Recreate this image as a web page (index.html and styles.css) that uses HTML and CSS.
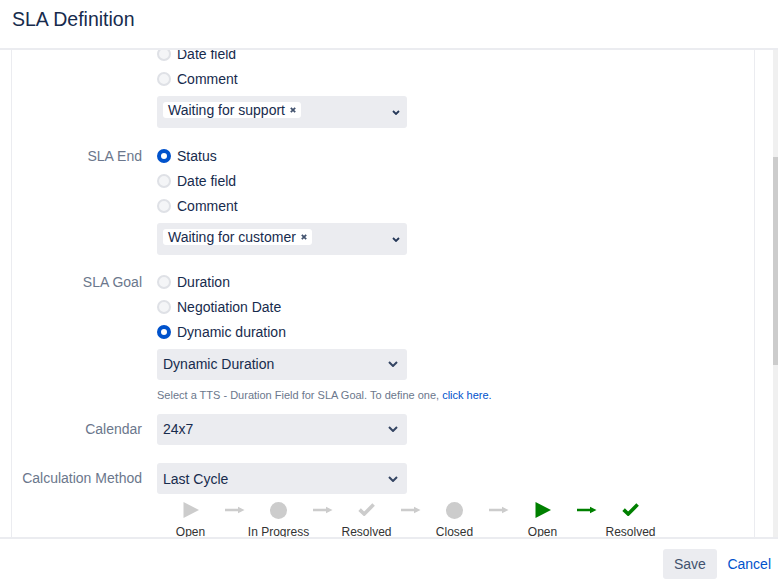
FILE: index.html
```html
<!DOCTYPE html>
<html lang="en">
<head>
<meta charset="utf-8">
<title>SLA Definition</title>
<link rel="stylesheet" href="styles.css">
</head>
<body>
<div class="dialog">
  <header class="dlg-header">
    <h1 class="dlg-title">SLA Definition</h1>
  </header>

  <div class="dlg-main">
    <div class="scroll-view">
      <div class="panel">
        <div class="row row-start">
          <div class="label label-radio">SLA Start</div>
          <div class="field">
            <div class="radio-row"><span class="radio checked"></span><span>Status</span></div>
            <div class="radio-row"><span class="radio"></span><span>Date field</span></div>
            <div class="radio-row"><span class="radio"></span><span>Comment</span></div>
            <div class="multi-select">
              <span class="tag">Waiting for support<svg class="tag-x" width="6" height="6" viewBox="0 0 6 6"><path d="M0.8 0.8L5.2 5.2M5.2 0.8L0.8 5.2"/></svg></span>
              <svg class="chev-sm" width="8" height="5" viewBox="0 0 8 5"><path d="M1 1L4 4L7 1"/></svg>
            </div>
          </div>
        </div>

        <div class="row row-end">
          <div class="label label-radio">SLA End</div>
          <div class="field">
            <div class="radio-row"><span class="radio checked"></span><span>Status</span></div>
            <div class="radio-row"><span class="radio"></span><span>Date field</span></div>
            <div class="radio-row"><span class="radio"></span><span>Comment</span></div>
            <div class="multi-select">
              <span class="tag">Waiting for customer<svg class="tag-x" width="6" height="6" viewBox="0 0 6 6"><path d="M0.8 0.8L5.2 5.2M5.2 0.8L0.8 5.2"/></svg></span>
              <svg class="chev-sm" width="8" height="5" viewBox="0 0 8 5"><path d="M1 1L4 4L7 1"/></svg>
            </div>
          </div>
        </div>

        <div class="row row-goal">
          <div class="label label-radio">SLA Goal</div>
          <div class="field">
            <div class="radio-row"><span class="radio"></span><span>Duration</span></div>
            <div class="radio-row"><span class="radio"></span><span>Negotiation Date</span></div>
            <div class="radio-row"><span class="radio checked"></span><span>Dynamic duration</span></div>
            <div class="select select-after-radio">
              <span>Dynamic Duration</span>
              <svg class="chev" width="10" height="6" viewBox="0 0 10 6"><path d="M1 1L5 5L9 1"/></svg>
            </div>
            <p class="help">Select a TTS - Duration Field for SLA Goal. To define one, <a href="#" class="help-link">click here.</a></p>
          </div>
        </div>

        <div class="row row-calendar">
          <div class="label label-select">Calendar</div>
          <div class="field">
            <div class="select">
              <span>24x7</span>
              <svg class="chev" width="10" height="6" viewBox="0 0 10 6"><path d="M1 1L5 5L9 1"/></svg>
            </div>
          </div>
        </div>

        <div class="row">
          <div class="label label-select">Calculation Method</div>
          <div class="field">
            <div class="select">
              <span>Last Cycle</span>
              <svg class="chev" width="10" height="6" viewBox="0 0 10 6"><path d="M1 1L5 5L9 1"/></svg>
            </div>
          </div>
        </div>

        <div class="row">
          <div class="label"></div>
          <div class="field">
            <div class="workflow">
              <div class="step">
                <svg class="ico ico-play" width="16" height="16" viewBox="0 0 16 16"><path class="fill-gray" d="M0.5 0L16 8L0.5 16Z"/></svg>
                <span class="step-label">Open</span>
              </div>
              <div class="step">
                <svg class="ico ico-arrow" width="20" height="10" viewBox="0 0 20 10"><path class="fill-gray" d="M0 3.7H13V1.8L19.5 5L13 8.2V6.3H0Z"/></svg>
              </div>
              <div class="step">
                <svg class="ico ico-dot" width="17" height="17" viewBox="0 0 17 17"><circle class="fill-gray" cx="8.5" cy="8.5" r="8.5"/></svg>
                <span class="step-label">In Progress</span>
              </div>
              <div class="step">
                <svg class="ico ico-arrow" width="20" height="10" viewBox="0 0 20 10"><path class="fill-gray" d="M0 3.7H13V1.8L19.5 5L13 8.2V6.3H0Z"/></svg>
              </div>
              <div class="step">
                <svg class="ico ico-check" width="17" height="13" viewBox="0 0 17 13"><path class="stroke-gray" d="M1.6 6.6L6.2 11L15.6 1.6"/></svg>
                <span class="step-label">Resolved</span>
              </div>
              <div class="step">
                <svg class="ico ico-arrow" width="20" height="10" viewBox="0 0 20 10"><path class="fill-gray" d="M0 3.7H13V1.8L19.5 5L13 8.2V6.3H0Z"/></svg>
              </div>
              <div class="step">
                <svg class="ico ico-dot" width="17" height="17" viewBox="0 0 17 17"><circle class="fill-gray" cx="8.5" cy="8.5" r="8.5"/></svg>
                <span class="step-label">Closed</span>
              </div>
              <div class="step">
                <svg class="ico ico-arrow" width="20" height="10" viewBox="0 0 20 10"><path class="fill-gray" d="M0 3.7H13V1.8L19.5 5L13 8.2V6.3H0Z"/></svg>
              </div>
              <div class="step">
                <svg class="ico ico-play" width="16" height="16" viewBox="0 0 16 16"><path class="fill-green" d="M0.5 0L16 8L0.5 16Z"/></svg>
                <span class="step-label">Open</span>
              </div>
              <div class="step">
                <svg class="ico ico-arrow" width="20" height="10" viewBox="0 0 20 10"><path class="fill-green" d="M0 3.7H13V1.8L19.5 5L13 8.2V6.3H0Z"/></svg>
              </div>
              <div class="step">
                <svg class="ico ico-check" width="17" height="13" viewBox="0 0 17 13"><path class="stroke-green" d="M1.6 6.6L6.2 11L15.6 1.6"/></svg>
                <span class="step-label">Resolved</span>
              </div>
            </div>
          </div>
        </div>
      </div>
    </div>
    <div class="scrollbar"><div class="thumb"></div></div>
  </div>

  <footer class="dlg-footer">
    <button class="btn" type="button">Save</button>
    <a href="#" class="btn-link">Cancel</a>
  </footer>
</div>
</body>
</html>
```

FILE: styles.css
```css
* { box-sizing: border-box; }

html, body {
  margin: 0;
  padding: 0;
  height: 100%;
  background: #ffffff;
  font-family: "Liberation Sans", Arial, sans-serif;
  color: #172b4d;
  font-size: 14px;
}

.dialog {
  height: 582px;
  display: flex;
  flex-direction: column;
  overflow: hidden;
}

.dlg-header {
  height: 50px;
  flex: none;
  border-bottom: 2px solid #ebecf0;
  padding: 7px 12px 0;
}

.dlg-title {
  margin: 0;
  font-size: 19.5px;
  font-weight: 400;
  line-height: 24px;
  color: #172b4d;
}

.dlg-main {
  flex: 1;
  min-height: 0;
  display: flex;
  overflow: hidden;
}

.scroll-view {
  flex: 1;
  overflow: hidden;
  padding: 0 18px 0 11px;
}

.panel {
  border-left: 1px solid #ebecf0;
  border-right: 1px solid #ebecf0;
  min-height: 100%;
}

.scrollbar {
  width: 5px;
  flex: none;
  background: #f0f0f0;
}

.thumb {
  margin-top: 107px;
  height: 208px;
  background: #cccccc;
}

.row {
  display: grid;
  grid-template-columns: 130px 1fr;
  column-gap: 15px;
  margin-bottom: 16px;
}

.row-start { margin-top: -33.5px; }
.row-end { margin-bottom: 15px; }
.row-goal { margin-bottom: 12px; }
.row-calendar { margin-bottom: 18.5px; }

.label {
  text-align: right;
  color: #6b778c;
  font-size: 14px;
  white-space: nowrap;
}

.label-radio { line-height: 25px; }
.label-select { line-height: 31px; }

.field { min-width: 0; }

.radio-row {
  height: 25px;
  display: flex;
  align-items: center;
  gap: 6px;
  color: #172b4d;
}

.radio {
  width: 14px;
  height: 14px;
  border-radius: 50%;
  border: 2px solid #dfe1e6;
  background: #f4f5f7;
  flex: none;
}

.radio.checked {
  border: 4.5px solid #0052cc;
  background: #ffffff;
}

.multi-select {
  width: 250px;
  height: 32px;
  margin-top: 4px;
  background: #ebecf0;
  border-radius: 3px;
  display: flex;
  align-items: flex-start;
  justify-content: space-between;
  padding: 6px 7px 0 6px;
}

.tag {
  background: #ffffff;
  border-radius: 3px;
  height: 16px;
  line-height: 16px;
  padding: 0 5px;
  display: inline-flex;
  align-items: center;
  gap: 5px;
  color: #172b4d;
  white-space: nowrap;
}

.tag-x path {
  stroke: #42526e;
  stroke-width: 1.7;
  fill: none;
}

.chev-sm {
  margin-top: 8px;
}

.chev-sm path {
  stroke: #253858;
  stroke-width: 1.8;
  fill: none;
}

.select {
  width: 250px;
  height: 31px;
  background: #ebecf0;
  border-radius: 3px;
  display: flex;
  align-items: center;
  justify-content: space-between;
  padding: 0 9px 0 6px;
  color: #172b4d;
}

.select-after-radio { margin-top: 4px; }

.chev path {
  stroke: #344563;
  stroke-width: 2;
  fill: none;
}

.help {
  margin: 8px 0 0;
  font-size: 11px;
  line-height: 14px;
  color: #6b778c;
  white-space: nowrap;
}

.help-link {
  color: #0052cc;
  text-decoration: none;
}

.workflow {
  display: flex;
  margin-top: -10px;
  padding-left: 11.5px;
}

.step {
  width: 44px;
  flex: none;
  display: flex;
  flex-direction: column;
  align-items: center;
}

.ico { display: block; }
.ico-play { margin: 2px 0; }
.ico-dot { margin: 1.5px 0; }
.ico-check { margin: 3px 0 4px; }
.ico-arrow { margin: 5px 0; }

.fill-gray { fill: #cccccc; }
.fill-green { fill: #008000; }
.stroke-gray { stroke: #cccccc; stroke-width: 3.6; fill: none; }
.stroke-green { stroke: #008000; stroke-width: 3.6; fill: none; }

.step-label {
  margin-top: 5px;
  font-size: 12px;
  line-height: 14px;
  color: #333333;
  white-space: nowrap;
}

.dlg-footer {
  height: 45px;
  flex: none;
  border-top: 2px solid #ebecf0;
  display: flex;
  justify-content: flex-end;
  align-items: flex-start;
  padding: 10px 7px 0 0;
  gap: 10.5px;
}

.btn {
  height: 30px;
  padding: 0 11px;
  border: none;
  border-radius: 3px;
  background: #ebecf0;
  color: #42526e;
  font-family: inherit;
  font-size: 14px;
}

.btn-link {
  line-height: 30px;
  color: #0052cc;
  text-decoration: none;
  font-size: 14px;
}
```
